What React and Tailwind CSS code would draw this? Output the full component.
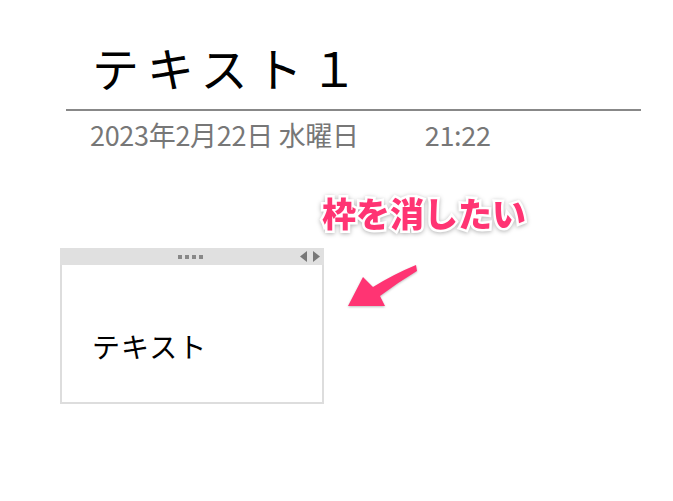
import React from 'react'

const jp = "font-['Noto_Sans_CJK_JP','Noto_Sans',sans-serif]"

function Arrow() {
  return (
    <svg width="80" height="55" viewBox="0 0 80 55" className="drop-shadow-[0_1px_1px_rgba(0,0,0,0.25)]">
      <path
        d="M6 47 L21 18 L31 28 Q52 15 74 6 L75 12 Q55 24 38 37 L43 47 Z"
        fill="#ff3473"
        strokeLinejoin="round"
      />
    </svg>
  )
}

export default function App() {
  return (
    <div className={`w-[673px] h-[501px] bg-white overflow-hidden ${jp}`}>
      <div className="pt-[37px] pl-[92px]">
        <h1 className="text-[47px] leading-[60px] text-black tracking-[8px]">テキスト１</h1>
      </div>
      <div className="ml-[66px] w-[575px] h-[2px] bg-[#888] mt-[12px]" />
      <div className="pl-[90px] mt-[9px] flex items-center text-[27px] leading-[30px] text-[#777] tracking-[-0.3px]">
        <span>2023年2月22日 水曜日</span>
        <span className="ml-[66px]">21:22</span>
      </div>

      <div className="ml-[322px] mt-[44px] text-[34px] leading-[38px] font-black text-[#ff3473] [-webkit-text-stroke:5px_white] [paint-order:stroke_fill] drop-shadow-[0_1px_2px_rgba(0,0,0,0.3)]">
        枠を消したい
      </div>

      <div className="flex mt-[16px] ml-[60px]">
        <div className="w-[264px] h-[156px] border-2 border-[#ddd] border-t-0 flex flex-col">
          <div className="h-[17px] -mx-[2px] bg-[#e0e0e0] flex items-center relative">
            <div className="flex gap-[3px] ml-[118px]">
              <span className="w-[4px] h-[4px] bg-[#888]" />
              <span className="w-[4px] h-[4px] bg-[#888]" />
              <span className="w-[4px] h-[4px] bg-[#888]" />
              <span className="w-[4px] h-[4px] bg-[#888]" />
            </div>
            <div className="ml-auto mr-[4px] flex gap-[6px]">
              <svg width="7" height="11" viewBox="0 0 7 11"><path d="M7 0 L0 5.5 L7 11 Z" fill="#777" /></svg>
              <svg width="7" height="11" viewBox="0 0 7 11"><path d="M0 0 L7 5.5 L0 11 Z" fill="#777" /></svg>
            </div>
          </div>
          <div className="pl-[30px] pt-[64px] text-[28px] leading-[34px] text-black tracking-[1px]">テキスト</div>
        </div>
        <div className="ml-[18px] mt-[11px]">
          <Arrow />
        </div>
      </div>
    </div>
  )
}
